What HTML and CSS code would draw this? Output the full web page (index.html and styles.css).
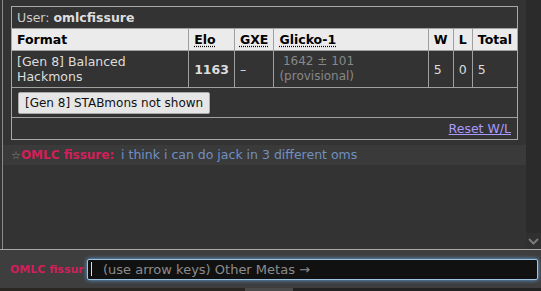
FILE: index.html
```html
<!DOCTYPE html>
<html lang="en">
<head>
  <meta charset="UTF-8" />
  <title>Ladder - omlcfissure</title>
  <link rel="stylesheet" href="styles.css">
</head>
<body>

<div class="room">
  <div class="log">
    <div class="infobox">
      <div class="infobox-title">User: <strong>omlcfissure</strong></div>
      <table class="ladder">
        <tr class="head">
          <th class="c-format">Format</th>
          <th class="c-elo"><abbr>Elo</abbr></th>
          <th class="c-gxe"><abbr>GXE</abbr></th>
          <th class="c-glicko"><abbr>Glicko-1</abbr></th>
          <th class="c-w">W</th>
          <th class="c-l">L</th>
          <th class="c-total">Total</th>
        </tr>
        <tr>
          <td>[Gen 8] Balanced<br>Hackmons</td>
          <td class="elo">1163</td>
          <td>–</td>
          <td><span class="glicko">1642 ± 101<br>(provisional)</span></td>
          <td>5</td>
          <td>0</td>
          <td>5</td>
        </tr>
        <tr>
          <td colspan="7" class="btn-cell"><button class="button">[Gen 8] STABmons not shown</button></td>
        </tr>
        <tr>
          <td colspan="7" class="reset-cell"><a href="#" class="reset">Reset W/L</a></td>
        </tr>
      </table>
    </div>

    <div class="chat">
      <span class="star">☆</span><strong class="username">OMLC fissure:</strong>
      <span class="message">i think i can do jack in 3 different oms</span>
    </div>
  </div>
  <div class="scrollbar">
    <div class="scroll-down">
      <svg width="11" height="7" viewBox="0 0 11 7"><path d="M1 1 L5.5 5.5 L10 1" fill="none" stroke="#7a7a7a" stroke-width="2"/></svg>
    </div>
  </div>
</div>

<div class="composer">
  <div class="composer-name">OMLC fissur</div>
  <div class="textbox"><span class="caret"></span><span class="placeholder">(use arrow keys) Other Metas →</span></div>
</div>

<div class="strip">
  <span class="strip-a"></span><span class="strip-b"></span><span class="strip-c"></span>
</div>

</body>
</html>
```

FILE: styles.css
```css
body {
  margin: 0;
  background: #333;
  color: #ddd;
  font-family: Verdana, "DejaVu Sans", sans-serif;
  font-size: 12px;
  width: 541px;
  height: 291px;
  overflow: hidden;
}
.room {
  display: flex;
  height: 249px;
  border-bottom: 1px solid #a8a8a8;
}
.log {
  flex: 1;
  margin-left: 2px;
  border-left: 1px solid #8a8a8a;
  padding-top: 6px;
}
.infobox {
  margin: 0 8px 0 8px;
  border: 1px solid #a8a8a8;
}
.infobox-title {
  height: 21px;
  line-height: 21px;
  padding-left: 5px;
  color: #ccc;
  font-size: 12.5px;
}
.infobox-title strong {
  color: #ddd;
}
.ladder {
  width: 100%;
  border-collapse: collapse;
  font-size: 12.5px;
}
.ladder th,
.ladder td {
  border: 1px solid #a0a0a0;
  padding: 0 5px;
  text-align: left;
}
.ladder tr > :first-child { border-left: none; }
.ladder tr > :last-child { border-right: none; }
.ladder tr:last-child td { border-bottom: none; }
.head th {
  background: #ebebeb;
  color: #000;
  height: 21px;
}
.head abbr {
  text-decoration: underline dotted;
  text-underline-offset: 2px;
}
.c-format { width: 167px; }
.c-elo { width: 33px; }
.c-gxe { width: 28px; }
.c-glicko { width: 144px; }
.c-w { width: 14px; }
.c-l { width: 8px; }
.ladder td {
  height: 36px;
  line-height: 15px;
}
.elo {
  font-weight: bold;
}
.glicko {
  display: inline-block;
  text-align: right;
  color: #888;
  font-size: 12px;
}
.btn-cell {
  padding: 4px 6px 3px !important;
  height: auto !important;
}
.button {
  font-family: inherit;
  font-size: 12px;
  background: #e6e6e6;
  color: #111;
  border: 1px solid #aaa;
  border-radius: 2px;
  height: 22px;
  padding: 0 6px;
}
.reset-cell {
  height: 21px !important;
  text-align: right !important;
  padding-right: 6px !important;
}
.reset {
  color: #a99aff;
  font-size: 12.5px;
}
.chat {
  margin-top: 5px;
  background: #3a3a3a;
  padding: 2px 8px;
  line-height: 15px;
  font-size: 12px;
}
.star {
  color: #888;
  font-size: 11px;
}
.username {
  color: #d11f5a;
}
.message {
  color: #7190c0;
  margin-left: 3px;
  font-size: 12.5px;
}
.scrollbar {
  width: 15px;
  background: #2b2b2b;
  display: flex;
  flex-direction: column;
  justify-content: flex-end;
}
.scroll-down {
  height: 16px;
  display: flex;
  align-items: center;
  justify-content: center;
  background: #303030;
}
.composer {
  display: flex;
  align-items: center;
  height: 38px;
  background: #3e3e3e;
}
.composer-name {
  width: 77px;
  padding-left: 10px;
  overflow: hidden;
  white-space: nowrap;
  color: #d11f5a;
  font-weight: bold;
  font-size: 11px;
}
.textbox {
  width: 446px;
  height: 19px;
  background: #111;
  border: 1px solid #9fc4e0;
  border-radius: 2px;
  box-shadow: 0 0 4px #5fa8e8;
  display: flex;
  align-items: center;
  padding-left: 3px;
}
.caret {
  width: 1px;
  height: 14px;
  background: #ddd;
  margin-right: 11px;
}
.placeholder {
  color: #8c8c8c;
  font-size: 13px;
}
.strip {
  display: flex;
  height: 3px;
}
.strip-a { width: 245px; background: #2a2621; }
.strip-b { width: 48px; background: #4a4a4a; }
.strip-c { flex: 1; background: #222; }
```
